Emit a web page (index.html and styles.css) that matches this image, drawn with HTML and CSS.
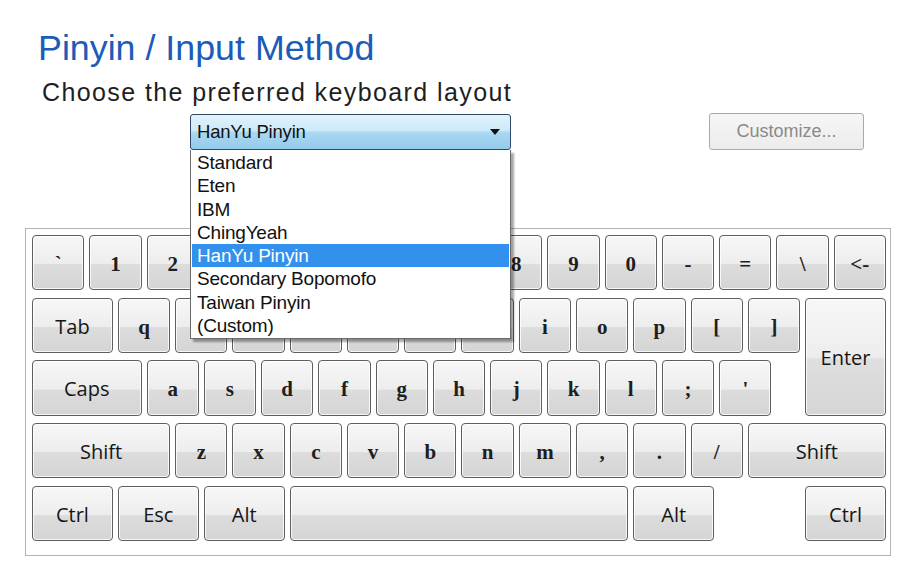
FILE: index.html
```html
<!DOCTYPE html>
<html>
<head>
<meta charset="utf-8">
<link rel="stylesheet" href="styles.css">
</head>
<body>
<div class="page">
  <h1 class="title">Pinyin / Input Method</h1>
  <p class="subtitle">Choose the preferred keyboard layout</p>
  <div class="controls">
    <div class="select-wrap">
      <div class="select">
        <span class="select-text">HanYu Pinyin</span>
        <svg class="arrow" width="10" height="6" viewBox="0 0 10 6"><path d="M0 0H10L5 6Z" fill="#111"/></svg>
      </div>
      <ul class="list">
        <li>Standard</li>
        <li>Eten</li>
        <li>IBM</li>
        <li>ChingYeah</li>
        <li class="sel">HanYu Pinyin</li>
        <li>Secondary Bopomofo</li>
        <li>Taiwan Pinyin</li>
        <li>(Custom)</li>
      </ul>
    </div>
    <button class="customize">Customize...</button>
  </div>
  <div class="keyboard">
    <div class="key ch">`</div>
    <div class="key ch">1</div>
    <div class="key ch">2</div>
    <div class="key ch">3</div>
    <div class="key ch">4</div>
    <div class="key ch">5</div>
    <div class="key ch">6</div>
    <div class="key ch">7</div>
    <div class="key ch">8</div>
    <div class="key ch">9</div>
    <div class="key ch">0</div>
    <div class="key ch">-</div>
    <div class="key ch">=</div>
    <div class="key ch">\</div>
    <div class="key ch">&lt;-</div>

    <div class="key mod w3">Tab</div>
    <div class="key ch">q</div>
    <div class="key ch">w</div>
    <div class="key ch">e</div>
    <div class="key ch">r</div>
    <div class="key ch">t</div>
    <div class="key ch">y</div>
    <div class="key ch">u</div>
    <div class="key ch">i</div>
    <div class="key ch">o</div>
    <div class="key ch">p</div>
    <div class="key ch">[</div>
    <div class="key ch">]</div>
    <div class="key mod enter">Enter</div>

    <div class="key mod w4">Caps</div>
    <div class="key ch">a</div>
    <div class="key ch">s</div>
    <div class="key ch">d</div>
    <div class="key ch">f</div>
    <div class="key ch">g</div>
    <div class="key ch">h</div>
    <div class="key ch">j</div>
    <div class="key ch">k</div>
    <div class="key ch">l</div>
    <div class="key ch">;</div>
    <div class="key ch">'</div>

    <div class="key mod w5">Shift</div>
    <div class="key ch">z</div>
    <div class="key ch">x</div>
    <div class="key ch">c</div>
    <div class="key ch">v</div>
    <div class="key ch">b</div>
    <div class="key ch">n</div>
    <div class="key ch">m</div>
    <div class="key ch">,</div>
    <div class="key ch">.</div>
    <div class="key ch">/</div>
    <div class="key mod w5">Shift</div>

    <div class="key mod w3">Ctrl</div>
    <div class="key mod w3">Esc</div>
    <div class="key mod w3">Alt</div>
    <div class="key space"></div>
    <div class="key mod w3">Alt</div>
    <div class="key mod ctrl-r">Ctrl</div>
  </div>
</div>
</body>
</html>
```

FILE: styles.css
```css
html, body {
  margin: 0;
  padding: 0;
  background: #ffffff;
}

.page {
  padding: 28px 0 0 25px;
  font-family: "Liberation Sans", Arial, sans-serif;
}

.title {
  margin: 0 0 0 13px;
  font-size: 35.8px;
  line-height: 40px;
  font-weight: normal;
  color: #1b5cb8;
}

.subtitle {
  margin: 9px 0 0 17px;
  font-size: 25px;
  line-height: 30px;
  letter-spacing: 1.4px;
  color: #1e1e1e;
}

.controls {
  display: flex;
  align-items: flex-start;
  margin: 7px 0 0 165px;
}

.select-wrap {
  position: relative;
  width: 321px;
}

.select {
  box-sizing: border-box;
  height: 36px;
  display: flex;
  align-items: center;
  justify-content: space-between;
  padding: 0 10px 0 6px;
  border: 1px solid #2e4a66;
  border-radius: 3px;
  background: linear-gradient(to bottom, #e2f2fb 0%, #cde9f8 45%, #aad8f2 52%, #93cbec 100%);
}

.select-text {
  font-size: 18.5px;
  color: #111;
  letter-spacing: -0.2px;
}

.arrow {
  display: block;
}

.list {
  position: absolute;
  z-index: 5;
  left: 0;
  top: 36px;
  box-sizing: border-box;
  width: 321px;
  margin: 0;
  padding: 1px;
  list-style: none;
  background: #ffffff;
  border: 1px solid #6a6a6a;
  border-top: none;
  box-shadow: 3px 3px 2px rgba(0, 0, 0, 0.35);
}

.list li {
  height: 23.3px;
  line-height: 23.3px;
  padding-left: 5px;
  font-size: 19px;
  color: #111;
  letter-spacing: -0.2px;
}

.list li.sel {
  background: #3291ec;
  color: #ffffff;
}

.customize {
  box-sizing: border-box;
  width: 155px;
  height: 37px;
  margin: -1px 0 0 198px;
  padding: 0;
  border: 1px solid #a9a9a9;
  border-radius: 3px;
  background: linear-gradient(to bottom, #f6f6f6, #ececec);
  font-family: "Liberation Sans", Arial, sans-serif;
  font-size: 18px;
  color: #8a8a8a;
}

.keyboard {
  box-sizing: border-box;
  width: 866px;
  margin-top: 78px;
  padding: 6px 4px 14px 6px;
  border: 1px solid #b4b4b4;
  background: #ffffff;
  display: grid;
  grid-template-columns: repeat(30, 1fr);
  grid-template-rows: repeat(5, 55.4px);
  column-gap: 5px;
  row-gap: 7.25px;
}

.key {
  grid-column: span 2;
  box-sizing: border-box;
  display: flex;
  align-items: center;
  justify-content: center;
  border: 1px solid #5e5e5e;
  border-radius: 4px;
  background: linear-gradient(to bottom, #f7f7f7 0%, #ededed 52%, #dcdcdc 54%, #d5d5d5 100%);
  box-shadow: inset 0 0 0 1px rgba(255, 255, 255, 0.8);
  color: #1e1e1e;
}

.ch {
  padding-top: 4px;
  font-family: "Liberation Serif", "Times New Roman", serif;
  font-weight: bold;
  font-size: 21px;
}

.mod {
  padding-top: 2px;
  font-family: "Open Sans", "Noto Sans", sans-serif;
  font-size: 20px;
  color: #161616;
}

.w3 { grid-column: span 3; }
.w4 { grid-column: span 4; }
.w5 { grid-column: span 5; }

.space { grid-column: span 12; }

.enter {
  grid-column: 28 / span 3;
  grid-row: 2 / span 2;
  background: linear-gradient(to bottom, #f7f7f7 0%, #ededed 50%, #dfdfdf 52%, #d5d5d5 100%);
}

.ctrl-r {
  grid-column: 28 / span 3;
  grid-row: 5;
}
```
